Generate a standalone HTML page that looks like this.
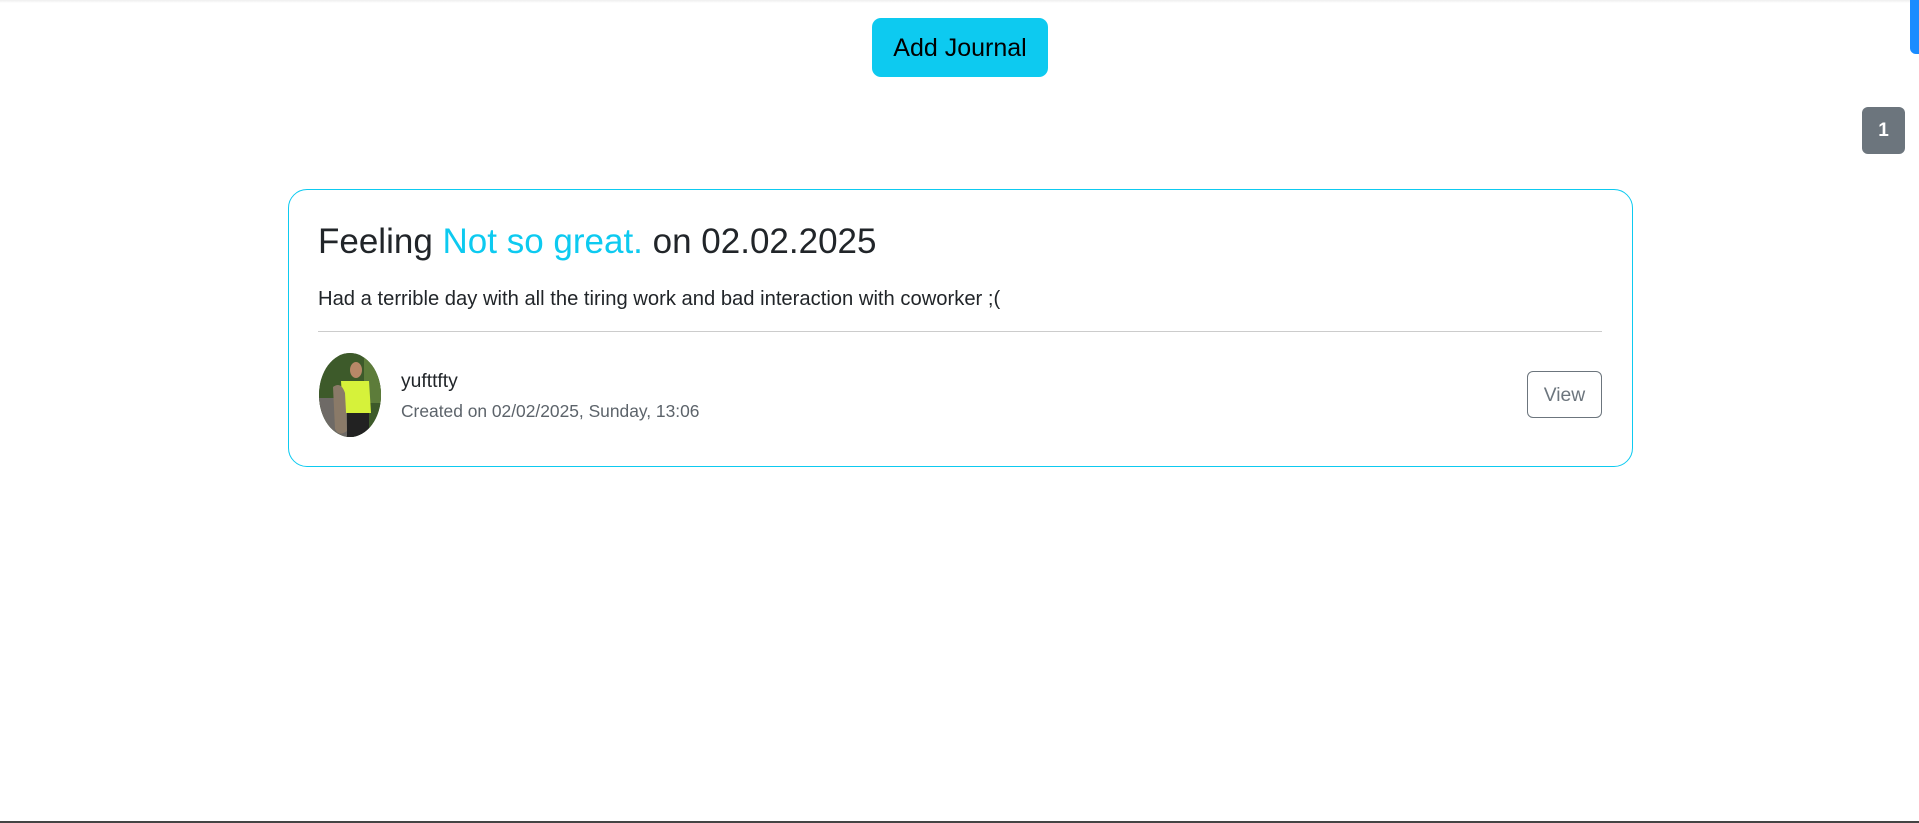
<!DOCTYPE html>
<html><head><meta charset="utf-8"><style>
*{box-sizing:border-box;margin:0;padding:0}
html,body{width:1919px;height:823px;overflow:hidden;background:#fff;font-family:"Liberation Sans",Arial,sans-serif;color:#212529}
.abs{position:absolute}
.topshadow{left:0;top:0;width:1919px;height:3px;background:linear-gradient(#eee,#fff)}
.add{left:872px;top:18px;width:176px;height:59px;background:#0dcaf0;border-radius:9px;color:#000;font-size:25px;display:flex;align-items:center;justify-content:center;padding-top:2px}
.bar{left:1910px;top:0;width:9px;height:54px;background:#1a8cff;border-bottom-left-radius:6px}
.badge{left:1862px;top:107px;width:43px;height:47px;background:#6c757d;border-radius:6px;color:#fff;font-weight:bold;font-size:19px;display:flex;align-items:center;justify-content:center}
.card{left:288px;top:189px;width:1345px;height:278px;border:1px solid #0dcaf0;border-radius:19px}
.title{left:318px;top:222px;font-size:35px;white-space:nowrap;line-height:40px}
.title span{color:#0dcaf0}
.body{left:318px;top:287px;font-size:20.2px;white-space:nowrap;line-height:24px}
.hr{left:318px;top:331px;width:1284px;height:1px;background:#ccc}
.av{left:319px;top:353px;width:62px;height:84px;border-radius:50%;overflow:hidden;background:#4a5a3a}
.name{left:401px;top:370px;font-size:19.3px;line-height:24px}
.created{left:401px;top:400px;font-size:17.4px;color:#5c636a;line-height:22px;white-space:nowrap}
.view{left:1527px;top:371px;width:75px;height:47px;border:1px solid #6c757d;border-radius:6px;color:#6c757d;font-size:19.3px;display:flex;align-items:center;justify-content:center;padding-top:2px}
.bottom{left:0;top:821px;width:1919px;height:2px;background:#444}
</style></head><body>
<div class="abs topshadow"></div>
<div class="abs add">Add Journal</div>
<div class="abs bar"></div>
<div class="abs badge">1</div>
<div class="abs card"></div>
<div class="abs title">Feeling <span>Not so great.</span> on 02.02.2025</div>
<div class="abs body">Had a terrible day with all the tiring work and bad interaction with coworker ;(</div>
<div class="abs hr"></div>
<div class="abs av"><svg width="62" height="84" viewBox="0 0 62 84">
<rect width="62" height="84" fill="#3d5a2a"/>
<rect x="0" y="45" width="30" height="39" fill="#6e6a66"/>
<rect x="45" y="0" width="17" height="50" fill="#5d7c3a"/>
<ellipse cx="37" cy="17" rx="6" ry="8" fill="#b88868"/>
<path d="M22 28 L50 28 L52 60 L24 60 Z" fill="#d6f23a"/>
<path d="M14 34 Q22 28 26 40 L28 78 Q20 84 16 76 Z" fill="#8a7a68"/>
<rect x="28" y="60" width="22" height="24" fill="#222"/>
</svg></div>
<div class="abs name">yufttfty</div>
<div class="abs created">Created on 02/02/2025, Sunday, 13:06</div>
<div class="abs view">View</div>
<div class="abs bottom"></div>
</body></html>
